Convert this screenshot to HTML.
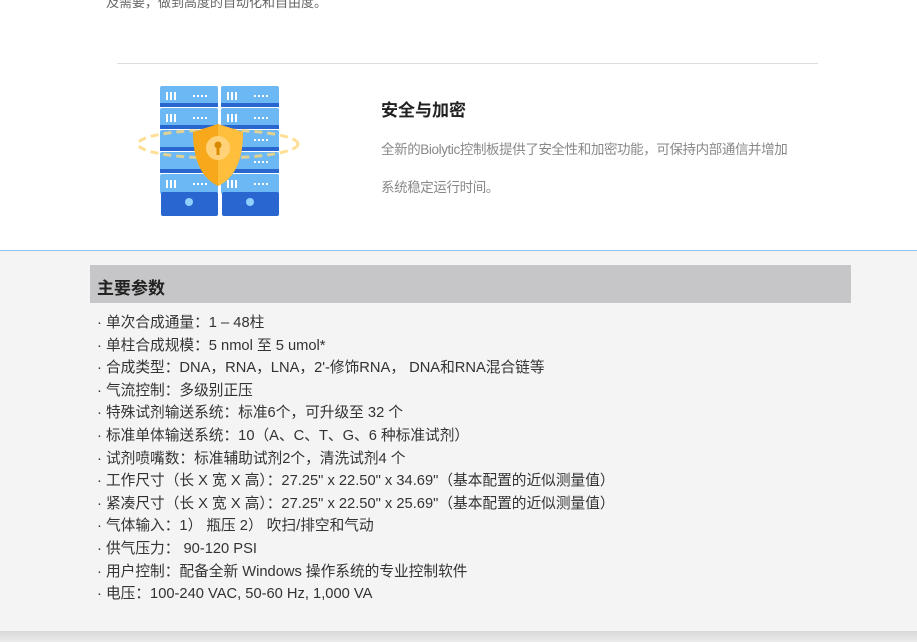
<!DOCTYPE html>
<html><head><meta charset="utf-8"><style>
*{margin:0;padding:0;box-sizing:border-box}
body{width:917px;height:642px;overflow:hidden;background:#f4f4f4;font-family:"Liberation Sans","Noto Sans CJK SC",sans-serif;position:relative}
.top{position:absolute;left:0;top:0;width:917px;height:251px;background:#fff;border-bottom:1px solid #8cc4ee}
.t0{position:absolute;left:106px;top:-8px;font-size:13px;color:#666}
.hr{position:absolute;left:117px;top:63px;width:701px;height:1px;background:#ddd}
h3{position:absolute;left:381px;top:96px;font-size:17px;font-weight:bold;color:#222}
.p{position:absolute;left:381px;font-size:13.5px;color:#888;letter-spacing:-0.4px}
.hd{position:absolute;left:90px;top:265px;width:761px;height:38px;background:#c6c6c8;font-size:17px;font-weight:bold;color:#222;padding:9px 0 0 7px}
ul{position:absolute;left:97px;top:312px;list-style:none;font-size:14.7px;color:#333;line-height:22.6px}
.bot{position:absolute;left:0;top:631px;width:917px;height:11px;background:linear-gradient(#d8d8d8,#ebebeb)}
</style></head><body>
<div class="top">
<div class="t0">及需要，做到高度的自动化和自由度。</div>
<div class="hr"></div>
<svg style="position:absolute;left:133px;top:84px" width="170" height="134" viewBox="0 0 170 134">
<g fill="#6cb8f4">
<rect x="27" y="2" width="58" height="20" rx="2"/><rect x="88" y="2" width="58" height="20" rx="2"/>
<rect x="27" y="24" width="58" height="20" rx="2"/><rect x="88" y="24" width="58" height="20" rx="2"/>
<rect x="27" y="46" width="58" height="20" rx="2"/><rect x="88" y="46" width="58" height="20" rx="2"/>
<rect x="27" y="68" width="58" height="20" rx="2"/><rect x="88" y="68" width="58" height="20" rx="2"/>
<rect x="27" y="90" width="58" height="20" rx="2"/><rect x="88" y="90" width="58" height="20" rx="2"/>
</g>
<g fill="#fff">
<rect x="33" y="8" width="2" height="8"/><rect x="37" y="8" width="2" height="8"/><rect x="41" y="8" width="2" height="8"/>
<rect x="94" y="8" width="2" height="8"/><rect x="98" y="8" width="2" height="8"/><rect x="102" y="8" width="2" height="8"/>
<rect x="33" y="30" width="2" height="8"/><rect x="37" y="30" width="2" height="8"/><rect x="41" y="30" width="2" height="8"/>
<rect x="94" y="30" width="2" height="8"/><rect x="98" y="30" width="2" height="8"/><rect x="102" y="30" width="2" height="8"/>
<rect x="33" y="96" width="2" height="8"/><rect x="37" y="96" width="2" height="8"/><rect x="41" y="96" width="2" height="8"/>
<rect x="94" y="96" width="2" height="8"/><rect x="98" y="96" width="2" height="8"/><rect x="102" y="96" width="2" height="8"/>
</g>
<g fill="none" stroke="#fff" stroke-width="2" stroke-dasharray="2 2">
<path d="M60 12h14M121 12h14M60 34h14M121 34h14M60 100h14M121 100h14M121 56h14M121 78h14"/>
</g>
<g fill="#2a66d0"><rect x="27" y="19" width="58" height="4"/><rect x="88" y="19" width="58" height="4"/><rect x="27" y="41" width="58" height="4"/><rect x="88" y="41" width="58" height="4"/><rect x="27" y="63" width="58" height="4"/><rect x="88" y="63" width="58" height="4"/><rect x="27" y="85" width="58" height="4"/><rect x="88" y="85" width="58" height="4"/>
<rect x="28" y="108" width="57" height="24" rx="2"/><rect x="89" y="108" width="57" height="24" rx="2"/></g>
<circle cx="56" cy="118" r="4" fill="#8fd0ff"/><circle cx="117" cy="118" r="4" fill="#8fd0ff"/>
<ellipse cx="85" cy="60" rx="80" ry="14" fill="none" stroke="#ffd77a" stroke-width="3" stroke-dasharray="8 5" opacity=".8"/>
<path d="M85 40 L110 48 Q110 90 85 102 Q60 90 60 48 Z" fill="#f7a81b"/>
<path d="M85 40 L110 48 Q110 90 85 102 Z" fill="#ffbe3c"/>
<circle cx="85" cy="64" r="12" fill="#ffd27a"/>
<circle cx="85" cy="61" r="3.5" fill="#d88a00"/><rect x="83.5" y="62" width="3" height="9" fill="#d88a00"/>
</svg>
<h3>安全与加密</h3>
<div class="p" style="top:138px">全新的Biolytic控制板提供了安全性和加密功能，可保持内部通信并增加</div>
<div class="p" style="top:176px">系统稳定运行时间。</div>
</div>
<div class="hd">主要参数</div>
<ul>
<li>· 单次合成通量：1 – 48柱</li>
<li>· 单柱合成规模：5 nmol 至 5 umol*</li>
<li>· 合成类型：DNA，RNA，LNA，2'-修饰RNA， DNA和RNA混合链等</li>
<li>· 气流控制：多级别正压</li>
<li>· 特殊试剂输送系统：标准6个，可升级至 32 个</li>
<li>· 标准单体输送系统：10（A、C、T、G、6 种标准试剂）</li>
<li>· 试剂喷嘴数：标准辅助试剂2个，清洗试剂4 个</li>
<li>· 工作尺寸（长 X 宽 X 高）：27.25" x 22.50" x 34.69"（基本配置的近似测量值）</li>
<li>· 紧凑尺寸（长 X 宽 X 高）：27.25" x 22.50" x 25.69"（基本配置的近似测量值）</li>
<li>· 气体输入：1） 瓶压 2） 吹扫/排空和气动</li>
<li>· 供气压力： 90-120 PSI</li>
<li>· 用户控制：配备全新 Windows 操作系统的专业控制软件</li>
<li>· 电压：100-240 VAC, 50-60 Hz, 1,000 VA</li>
</ul>
<div class="bot"></div>
</body></html>
